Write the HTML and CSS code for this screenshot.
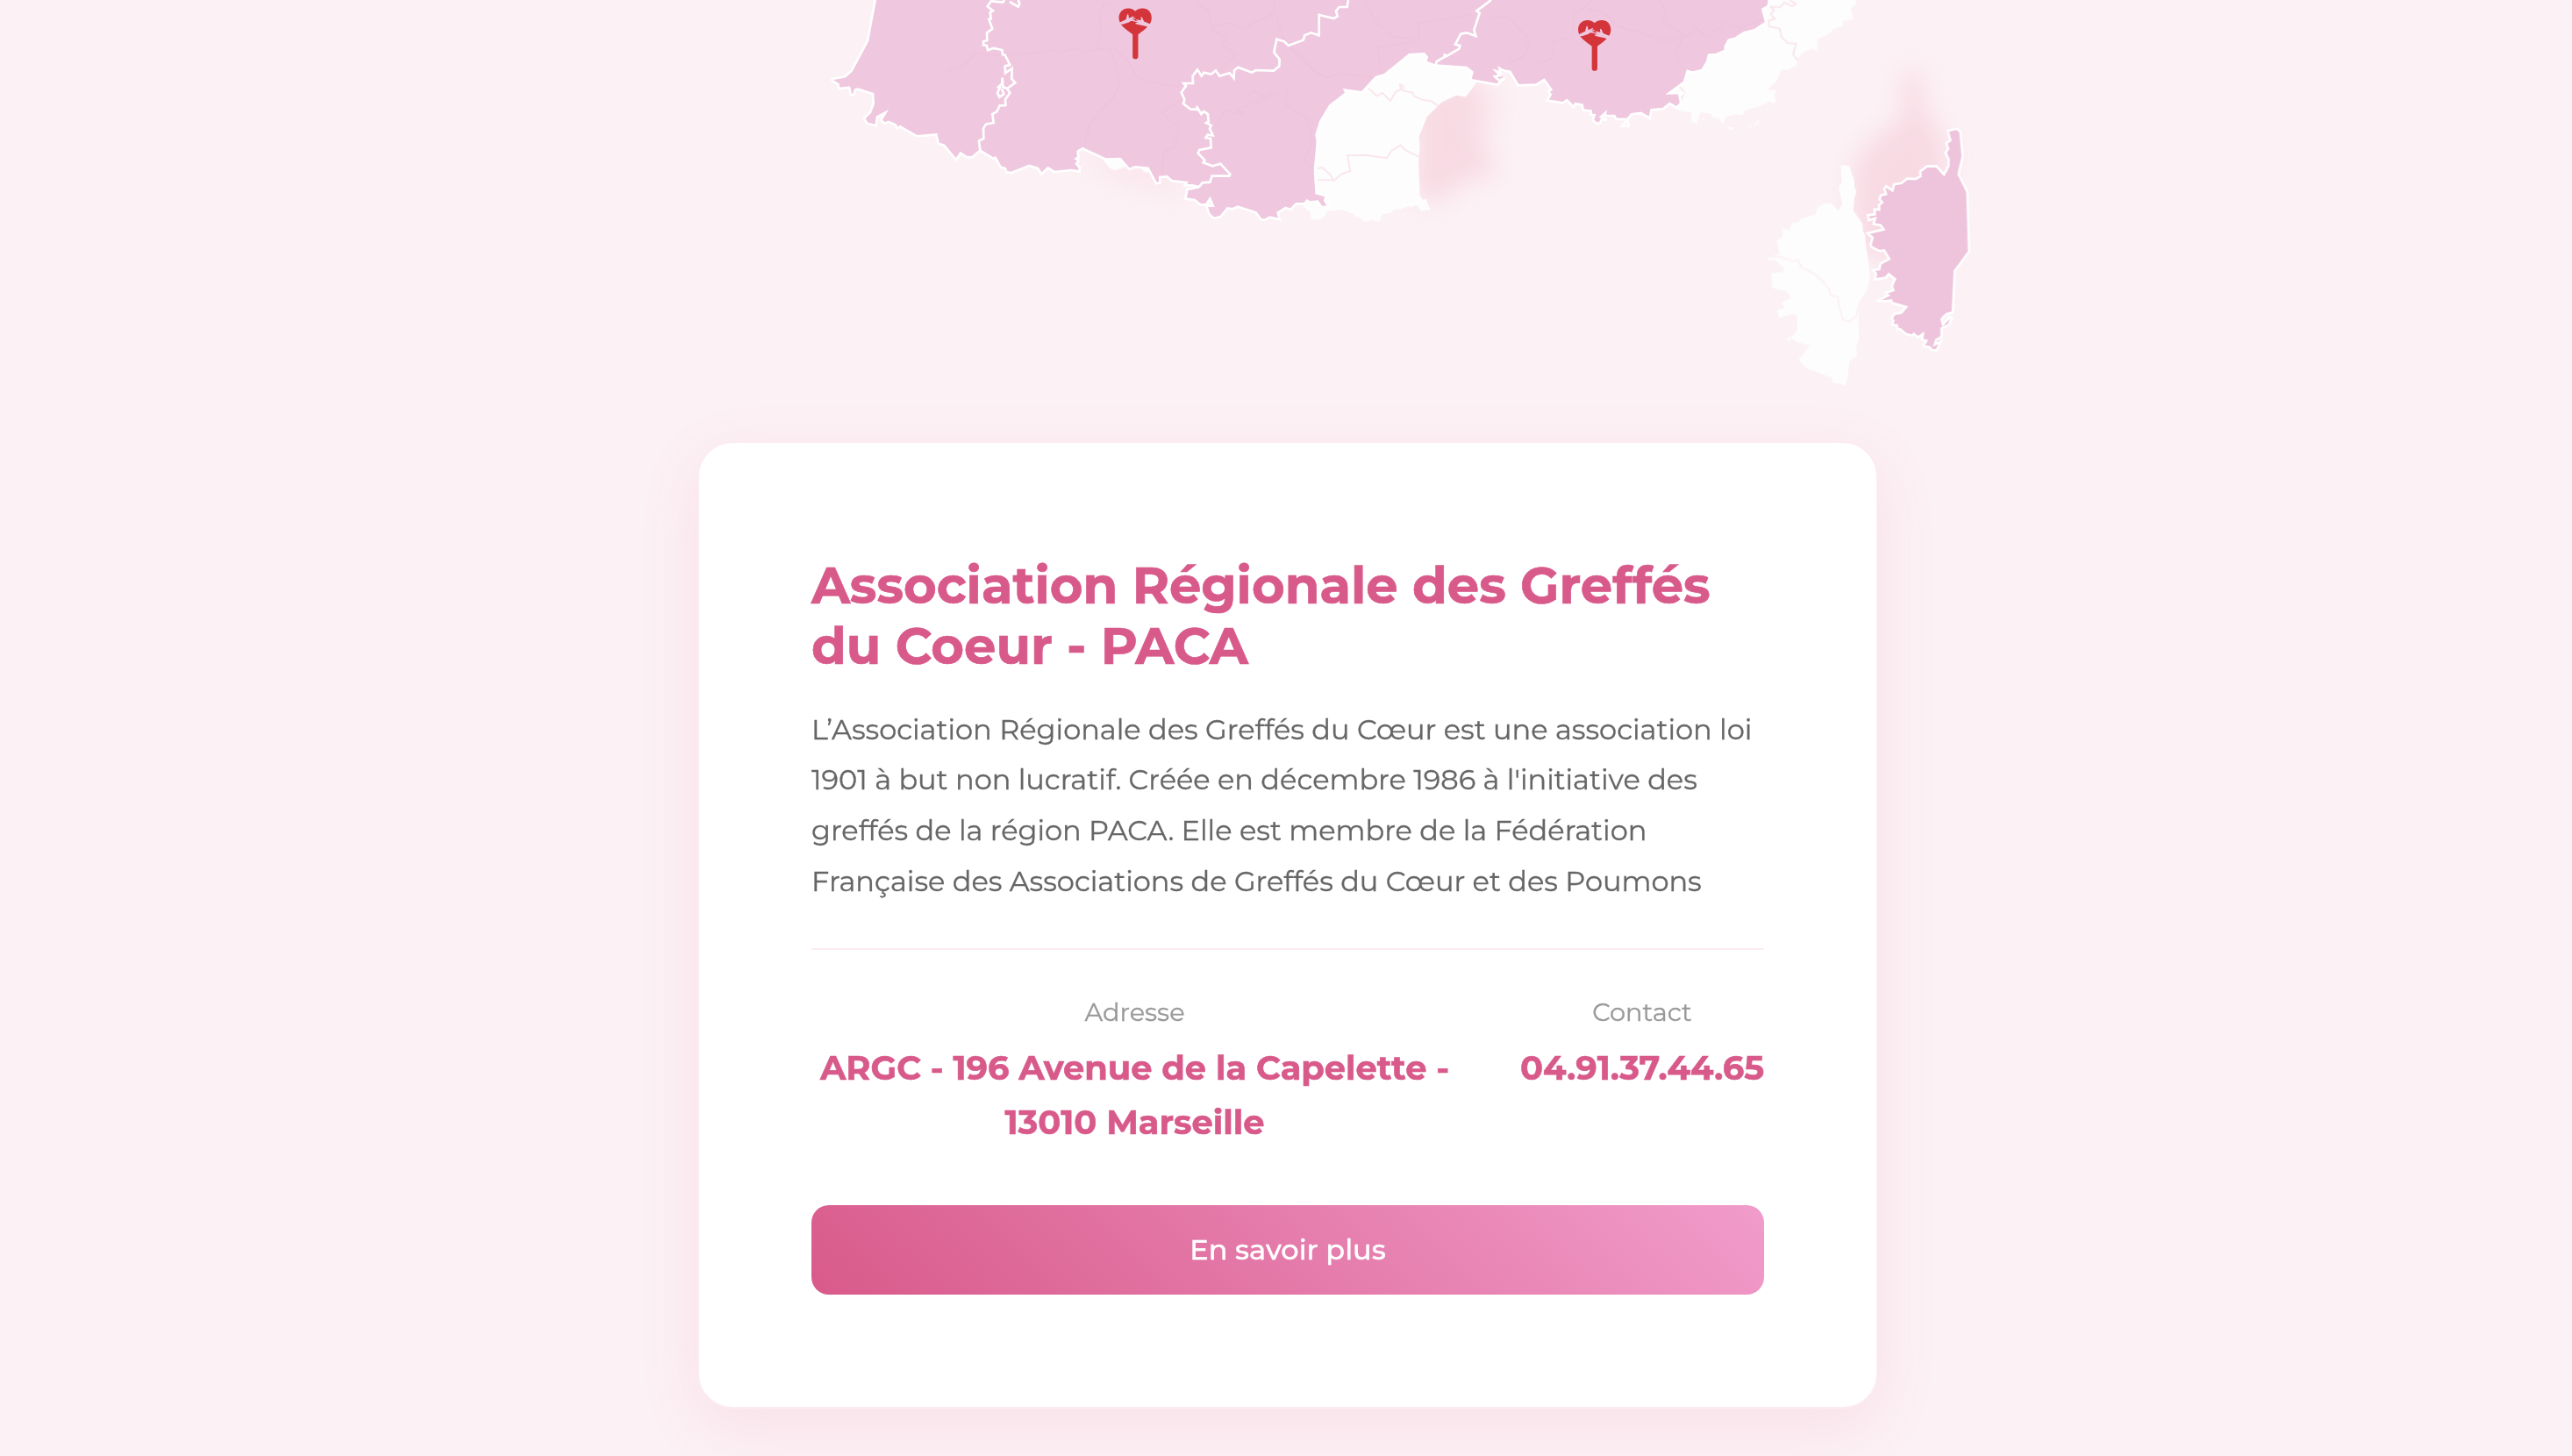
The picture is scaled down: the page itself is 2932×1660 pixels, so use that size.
FILE: index.html
```html
<!DOCTYPE html>
<html lang="fr">
<head>
<meta charset="utf-8">
<title>Associations régionales</title>
<link rel="stylesheet" href="styles.css">
</head>
<body>
<main class="page">
  <svg class="map" viewBox="0 0 2932 503" aria-hidden="true">
    <defs>
      <filter id="soft" x="-40%" y="-40%" width="180%" height="180%"><feGaussianBlur stdDeviation="40"/></filter>
      <symbol id="pin" viewBox="0 0 112 174" overflow="visible">
        <path class="pin-heart" d="M0 33C0 13 14 0 32 0C43 0 51 4 56 10C61 4 70 0 81 0C100 0 112 14 112 33C112 57 90 72 66 89V164a9.500 9.500 0 0 1-19 0V89C24 72 0 57 0 33Z"/>
        <path class="pin-hand" d="M2 49L24 38L29 20L33 22L34 34L50 27L52 30L44 35L56 33L57 36L47 39L57 42L54 45L42 43L34 48L13 55L4 55Z"/>
        <path class="pin-hand" d="M108 54L86 45L79 30L75 31L76 41L60 38L59 41L67 44L54 43L55 46L66 48L56 50L58 53L72 57L91 61L102 66Z"/>
      </symbol>
    </defs>
    <g transform="scale(.333333)">
      <g class="shade" filter="url(#soft)">
        <path d="M4840 300L5060 260L5075 400L5060 470L5120 590L5000 620L4920 690L4840 670Z"/>
        <path class="shade-light" d="M3690 510L3900 560L4060 640L4020 660L3800 600Z"/>
        <path d="M6510 250L6570 250L6580 370L6660 500L6640 700L6480 900L6360 860L6330 680L6350 540L6440 450L6510 400Z"/>
        <path class="shade-light" d="M5090 320L5130 300L5110 420L5090 520Z"/>
      </g>
      <g class="base">
        <path transform="translate(3990)" d="M480 690L500 300L800 150L1050 230L1058 285L1022 332L990 326L940 350L890 400L862 470L866 500L861 560L866 670L876 683L888 680L893 700L904 718L870 721L855 702L835 708L824 705L800 716L779 715L765 728L738 733L728 758L700 752L680 760L660 745L645 741L640 733L600 718L550 722L535 745L515 753L495 750L490 725L465 706Z"/>
        <path transform="translate(5100)" d="M600 250L950 -10L1250 -10L1247 15L1230 28L1238 65L1205 72L1202 88L1170 100L1145 122L1116 133L1115 173L1095 166L1060 184L1052 198L1042 225L1016 238L991 240L975 278L942 308L977 309L966 325L973 342L968 354L950 347L921 363L869 376L860 393L830 392L800 400L792 426L779 403L755 401L750 388L715 385L704 423L682 414L686 385L640 378Z"/>
        <path transform="translate(5100)" d="M718 405l14 3l-10 4ZM805 433l15 2l12 2l-14 8ZM876 432l16-3l-6 7ZM896 430l18-19l3 3l-14 17Z"/>
        <path transform="translate(2790)" d="M980 545L996 532L1045 548L1060 570L1022 583L1004 575ZM1112 576L1142 574L1136 590L1122 588Z"/>
        <path transform="translate(5940 180)" d="M355 385L386 388L393 415L401 435L403 462L409 476L401 500L398 540L412 560L430 585L431 610L439 625L441 660L449 705L455 770L449 800L439 822L415 858L417 985L409 1000L410 1038L386 1052L380 1100L372 1140L355 1132L325 1128L326 1110L302 1104L265 1089L240 1082L210 1051L250 1002L209 991L187 977L180 988L167 982L192 968L207 948L205 900L192 893L145 908L137 879L165 875L152 856L186 838L170 817L122 805L118 755L158 750L162 738L131 710L107 710L105 698L146 688L137 642L158 628L153 602L180 607L188 583L210 580L220 568L270 553L275 530L300 516L325 516L346 540L360 520L355 490L348 465L358 440Z"/>
      </g>
      <g class="base-line">
        <path transform="translate(3990)" d="M690 302L718 328L738 318L765 345L784 313L802 306L797 288L809 295L808 310L842 317L845 328L877 342L905 346L928 362M515 577L532 573L560 598L570 619L597 596L628 585L618 532L680 530L753 541L768 516L800 496L817 514L863 536M518 616H565"/>
        <path transform="translate(5100)" d="M1020 0L1043 13L1028 21L1003 8L989 24H955L968 35L955 48L970 65L948 70L950 90L986 97L992 125L1013 147L1043 150L1032 185L1048 207M640 292L661 315L645 350"/>
        <path class="faint" transform="translate(5940 180)" d="M105 698L145 697L195 715L208 707L220 733L270 760L290 778L315 808L320 830L345 835L352 877L362 913L383 920L408 902L415 870"/>
      </g>
      <g class="region">
        <path d="M2993 0L2967 140L2912 242L2890 262L2846 270V276L2866 288L2869 303L2904 299L2910 325H2919L2925 307L2934 305L2985 321L2987 355L2976 384L2955 404L2965 422L2996 430L3000 400L3028 385L3012 412L3027 422L3039 417L3062 427L3068 439L3078 433L3136 466L3202 460L3209 491L3228 497L3270 547L3285 524L3307 538H3325L3352 515L3398 543L3404 539L3422 572L3438 576L3442 589L3459 591L3520 567L3550 576L3561 596L3584 574L3606 588L3664 582L3692 587V573L3681 560L3689 548L3680 543L3688 537L3686 518L3702 508L3782 545L3831 543L3862 579L3882 571L3926 575L3954 628L3967 625V606L3991 604L4008 619L4058 624L4052 634H4078L4100 640L4060 648L4054 680L4085 684L4105 700H4125L4138 680L4148 704H4126L4135 732L4151 747L4174 741L4198 712L4215 715L4233 707L4295 727L4313 752H4326L4343 743L4377 751L4370 728L4397 711L4413 717L4433 697H4461L4470 686L4480 692L4506 689L4520 709L4544 706L4531 686L4535 670L4502 661L4497 583L4506 485L4502 461L4516 416L4548 362L4604 318L4599 308L4658 316L4706 264L4735 256L4820 187L4870 184L4880 195L4875 212L4910 224L5015 231L5035 247L5028 273L5120 290L5146 266L5128 255L5143 240L5164 245L5192 292L5253 290L5281 273L5305 307L5295 312L5303 324L5291 344L5345 352L5359 343L5381 366L5388 355L5411 359L5414 376L5441 380V392L5453 394L5447 411L5460 422L5471 421L5490 395H5521L5527 407L5566 408L5580 391L5612 387L5642 404L5648 376L5688 372L5710 354L5734 368L5749 352L5743 326L5760 318L5708 319L5760 281L5771 243L5788 248L5822 240L5839 210L5844 188L5870 186L5897 175L5912 137L5935 131L5965 112L6000 103L6040 77L6028 32L6048 20L6050 0Z"/>
        <path class="corsica" d="M6661 448L6691 440L6704 450L6712 536L6698 596L6728 656L6734 860L6685 927L6678 1069L6642 1080L6640 1110L6676 1090L6663 1112L6640 1123V1152L6622 1162L6638 1168L6623 1198H6607L6600 1188L6578 1184L6588 1165L6573 1162L6576 1142L6560 1154L6545 1142L6541 1148L6518 1142L6498 1126L6491 1128L6487 1113L6471 1110L6475 1097L6469 1090L6479 1073L6502 1070L6519 1050L6470 1036L6468 1028L6444 1030L6424 1028L6458 1010L6450 1001L6475 993L6470 980L6476 963L6481 955L6459 937L6449 950L6411 956L6416 936L6406 924L6427 921L6431 902L6461 886L6443 856L6429 859L6401 845L6397 838L6404 813L6387 798L6442 785L6431 770L6407 766L6413 747L6391 753L6388 736L6412 733L6410 716L6427 717L6426 702L6437 692L6428 682L6432 668L6450 664L6444 645L6451 637L6472 652L6478 630L6502 627L6522 611L6552 612L6568 603L6567 586L6590 569L6622 568L6648 597L6664 567V543L6653 523L6663 508L6656 490L6670 480Z"/>
      </g>
      <g class="dept-line">
        <path transform="translate(2790)" d="M450 240L500 230L550 180L590 190L690 185L780 180L810 170L830 180L890 165L920 178L960 168L975 100L970 50L985 15L1030 8M960 168L1010 170L1040 280L1015 340L970 380L935 430L918 500M1020 165L1065 205L1100 268L1190 290L1250 298M1260 330L1185 385L1240 440L1230 500L1190 520L1185 600"/>
        <path transform="translate(3990)" d="M100 15L145 35L150 90L215 80L260 98L330 62L365 45L370 0M150 95L200 130L190 155L240 185L205 215L180 245M375 50L390 110L410 155L470 205L500 240L550 265L590 250L700 265M410 300V360L480 405L500 480L470 550L505 590M165 430L200 378L270 395L240 375L330 340L360 320L405 330M270 330L300 312L330 330L310 360M680 0L710 70L770 125L862 135V80L950 65L1040 50M860 138L720 165L735 250"/>
        <path transform="translate(5100)" d="M350 0L285 50L275 130L215 140L205 200L145 225M330 30L390 45L430 90L520 115L590 140L680 120L700 95L740 130L800 75L850 95L930 65M570 0L600 40L585 70L660 120L630 180L655 240M0 55L60 60L130 135L120 185L60 220"/>
      </g>
      <g class="border">
        <path d="M2993 0L2967 140L2912 242L2890 262L2846 270V276L2866 288L2869 303L2904 299L2910 325H2919L2925 307L2934 305L2985 321L2987 355L2976 384L2955 404L2965 422L2996 430L3000 400L3028 385L3012 412L3027 422L3039 417L3062 427L3068 439L3078 433L3136 466L3202 460L3209 491L3228 497L3270 547L3285 524L3307 538H3325L3352 515L3398 543L3404 539L3422 572L3438 576L3442 589L3459 591L3520 567L3550 576L3561 596L3584 574L3606 588L3664 582L3692 587V573L3681 560L3689 548L3680 543L3688 537L3686 518L3702 508L3782 545L3831 543L3862 579L3882 571L3926 575L3954 628L3967 625V606L3991 604L4008 619L4058 624L4052 634H4078L4100 640L4060 648L4054 680L4085 684L4105 700H4125L4138 680L4148 704H4126L4135 732L4151 747L4174 741L4198 712L4215 715L4233 707L4295 727L4313 752H4326L4343 743L4377 751L4370 728L4397 711L4413 717L4433 697H4461L4470 686L4480 692L4506 689L4520 709L4544 706L4531 686L4535 670L4502 661L4497 583L4506 485L4502 461L4516 416L4548 362L4604 318L4599 308L4658 316L4706 264L4735 256L4820 187L4870 184L4880 195L4875 212L4910 224L5015 231L5035 247L5028 273L5120 290L5146 266"/>
        <path d="M5120 290L5146 266L5128 276L5112 262L5130 258L5116 243L5133 248L5128 234L5143 242L5164 245L5192 292L5253 290L5281 273L5305 307L5295 312L5303 324L5291 344L5345 352L5359 343L5381 366L5388 355L5411 359L5414 376L5441 380V392L5453 394L5447 411L5460 422L5471 421L5478 408L5495 411L5475 400L5490 387L5488 396H5521L5527 407L5566 408L5570 431H5547L5580 391L5612 387L5642 404L5648 376L5688 372L5710 354L5734 368L5749 352L5743 326L5760 318L5708 319L5760 281L5771 243L5788 248L5822 240L5839 210L5844 188L5870 186L5897 175L5902 187L5900 160L5912 137L5935 131L5965 112L6000 103L6040 77L6028 32L6048 20L6050 0"/>
        <path transform="translate(2790)" d="M602 0L587 22L606 37L596 42L599 64L592 66L604 98L585 112L586 138L573 142V154L584 156L588 172L608 165L637 171L639 187L647 188L664 222L647 226L648 250L671 234L670 270L682 283L654 303L664 318L648 340L649 360L629 361L619 382L604 390L608 420L582 425L573 440L574 474L558 482L562 515M602 4L640 8L645 0M663 6L692 23L697 12L692 0M654 303L640 297L638 266L637 286L624 298L630 300L621 317L628 332L643 322L636 304"/>
        <path transform="translate(3990)" d="M621 0L617 24H590L579 38L584 56L572 63L521 51V121L494 112L472 121L467 137L416 156L402 142L376 134L367 179L386 203L385 226L366 242L304 240L292 248L244 230L231 241L230 267L215 250L181 260L168 241L152 254L127 248L119 260L105 238L89 260L90 285H58L66 294L50 316L61 340L57 355L81 373L108 375L102 363L118 390L127 381L141 391L143 416L135 420L152 429L147 440L158 463L140 461L133 471L150 474L152 505L112 513L107 524L130 548L125 556L157 568L184 560L217 596L214 602H155L148 623L122 625L110 640M1110 0L1060 37L1070 45L1051 103L1057 123L1026 112L1006 116L987 152L1003 156L1000 167L955 193L950 184L951 194L923 210L920 224"/>
        <path d="M6661 448L6691 440L6704 450L6712 536L6698 596L6728 656L6734 860L6685 927L6678 1069L6657 1074L6640 1092L6645 1110L6668 1082L6676 1090L6663 1112L6640 1123V1152L6622 1162L6617 1178L6638 1168L6623 1198H6607L6600 1188L6578 1184L6588 1165L6573 1162L6576 1142L6560 1154L6545 1142L6541 1148L6518 1142L6498 1126L6491 1128L6487 1113L6471 1110L6475 1097L6469 1090L6479 1073L6502 1070L6519 1050L6470 1036L6468 1028L6444 1030L6424 1028L6458 1010L6450 1001L6475 993L6470 980L6476 963L6481 955L6459 937L6449 950L6411 956L6416 936L6406 924L6427 921L6431 902L6461 886L6443 856L6429 859L6401 845L6397 838L6404 813L6387 798L6442 785L6431 770L6407 766L6413 747L6391 753L6388 736L6412 733L6410 716L6427 717L6426 702L6437 692L6428 682L6432 668L6450 664L6444 645L6451 637L6472 652L6478 630L6502 627L6522 611L6552 612L6568 603L6567 586L6590 569L6622 568L6648 597L6664 567V543L6653 523L6663 508L6656 490L6670 480Z"/>
      </g>
    </g>
    <use href="#pin" x="1275.500" y="9.500" width="37.300" height="58"/>
    <use href="#pin" x="1799" y="23" width="37.300" height="58"/>
  </svg>

  <article class="card">
    <h1 class="card-title">Association Régionale des Greffés du Coeur - PACA</h1>
    <p class="card-text">L’Association Régionale des Greffés du Cœur est une association loi 1901 à but non lucratif. Créée en décembre 1986 à l'initiative des greffés de la région PACA. Elle est membre de la Fédération Française des Associations de Greffés du Cœur et des Poumons</p>
    <div class="details">
      <div class="detail address">
        <div class="label">Adresse</div>
        <div class="value">ARGC - 196 Avenue de la Capelette - 13010 Marseille</div>
      </div>
      <div class="detail contact">
        <div class="label">Contact</div>
        <div class="value">04.91.37.44.65</div>
      </div>
    </div>
    <a class="button">En savoir plus</a>
  </article>
</main>
</body>
</html>
```
FILE: styles.css
```css
* { box-sizing: border-box; }
body {
  margin: 0;
  background: #fcf1f5;
  font-family: Montserrat, Inter, sans-serif;
  font-size: 32px;
  overflow: hidden;
}
.page { display: flex; flex-direction: column; height: 1660px; }
.map { display: block; flex: none; width: 2932px; height: 503px; }
.shade { fill: #f8dae3; }
.shade-light { opacity: .6; }
.base { fill: #fdfdfd; }
.base-line { fill: none; stroke: #fae7ed; stroke-width: 6; stroke-linejoin: round; }
.base-line .faint { stroke: #fcf2f5; }
.region { fill: #efc8df; }
.corsica { fill: #eec4dc; }
.dept-line { fill: none; stroke: #eec2db; stroke-width: 5; stroke-linejoin: round; opacity: .7; }
.border { fill: none; stroke: #fff; stroke-width: 8; }
.pin-heart { fill: #d4353b; }
.pin-hand { fill: #efc8df; }

.card {
  flex: none;
  width: 1346px;
  height: 1103px;
  margin-left: 795px;
  padding: 127.6px 128px 0;
  border: 2px solid #fcecf1;
  border-radius: 40px;
  background: #fff;
  box-shadow: 0 20px 70px rgba(216, 90, 138, .11);
  -webkit-text-stroke-width: .35px;
}
.card-title {
  margin: 0 0 32px;
  color: #d85a8a;
  font-size: 57.6px;
  font-weight: 700;
  line-height: 1.2;
  -webkit-text-stroke-width: .7px;
}
.card-text { margin: 0 0 48px; color: #666; line-height: 1.8; }
.details {
  display: flex;
  justify-content: space-between;
  margin-bottom: 63.4px;
  padding-top: 48px;
  border-top: 2px solid #fdeaf0;
  text-align: center;
  line-height: 1.6;
}
.address { width: 737px; }
.contact { width: 278px; white-space: nowrap; }
.label { margin-bottom: 10.2px; color: #999; font-size: 28.8px; }
.value { color: #d85a8a; font-size: 38.4px; font-weight: 700; -webkit-text-stroke-width: .6px; }
.button {
  display: flex;
  align-items: center;
  justify-content: center;
  height: 102px;
  border-radius: 20px;
  background: linear-gradient(45deg, #d85a8a, #f19ccb);
  color: #fff;
  font-weight: 500;
}
```
